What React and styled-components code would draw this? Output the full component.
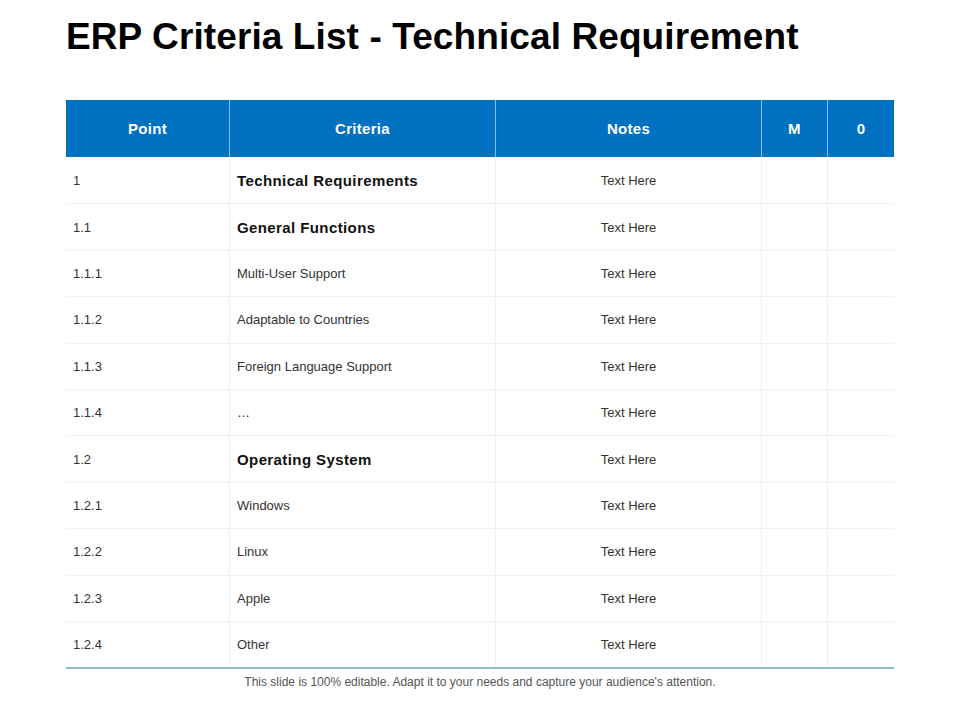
import React from "react";
import styled, { createGlobalStyle } from "styled-components";

const Global = createGlobalStyle`
  html, body { margin: 0; padding: 0; background: #fff; }
  body { font-family: "Liberation Sans", Arial, sans-serif; }
`;

const Page = styled.div`
  width: 960px;
  height: 720px;
  box-sizing: border-box;
  padding: 16px 66px 0 66px;
  display: flex;
  flex-direction: column;
`;

const Title = styled.h1`
  margin: 0;
  font-size: 37px;
  line-height: 42px;
  font-weight: 700;
  color: #000;
  letter-spacing: 0.1px;
  white-space: nowrap;
`;

const Table = styled.div`
  margin-top: 42px;
  display: grid;
  grid-template-columns: 163px 266px 266px 66px 67px;
  border-bottom: 2px solid #8fbec8;
`;

const HeadCell = styled.div`
  height: 57px;
  background: #0070c0;
  color: #fff;
  font-weight: 700;
  font-size: 15px;
  letter-spacing: 0.3px;
  display: flex;
  align-items: center;
  justify-content: center;
  border-left: ${(p) => (p.$first ? "none" : "1px solid #7ec3ef")};
`;

const Cell = styled.div`
  height: 46.4px;
  box-sizing: border-box;
  display: flex;
  align-items: center;
  justify-content: ${(p) => (p.$center ? "center" : "flex-start")};
  padding-left: ${(p) => (p.$center ? "0" : "7px")};
  border-left: ${(p) => (p.$first ? "none" : "1px solid #f0f0f0")};
  border-top: ${(p) => (p.$top ? "none" : "1px solid #f0f0f0")};
  font-size: ${(p) => (p.$bold ? "15px" : "13px")};
  letter-spacing: ${(p) => (p.$bold ? "0.4px" : "0")};
  font-weight: ${(p) => (p.$bold ? 700 : 400)};
  color: ${(p) => (p.$bold ? "#111" : "#333")};
`;

const Footer = styled.div`
  margin-top: 6px;
  text-align: center;
  font-size: 12px;
  color: #555;
`;

const rows = [
  ["1", "Technical Requirements", true],
  ["1.1", "General Functions", true],
  ["1.1.1", "Multi-User Support"],
  ["1.1.2", "Adaptable to Countries"],
  ["1.1.3", "Foreign Language Support"],
  ["1.1.4", "…"],
  ["1.2", "Operating System", true],
  ["1.2.1", "Windows"],
  ["1.2.2", "Linux"],
  ["1.2.3", "Apple"],
  ["1.2.4", "Other"],
];

export default function App() {
  return (
    <>
      <Global />
      <Page>
        <Title>ERP Criteria List - Technical Requirement</Title>
        <Table>
          <HeadCell $first>Point</HeadCell>
          <HeadCell>Criteria</HeadCell>
          <HeadCell>Notes</HeadCell>
          <HeadCell>M</HeadCell>
          <HeadCell>0</HeadCell>
          {rows.map(([pt, crit, bold], i) => (
            <React.Fragment key={pt}>
              <Cell $first $top={i === 0}>{pt}</Cell>
              <Cell $top={i === 0} $bold={bold}>{crit}</Cell>
              <Cell $top={i === 0} $center>Text Here</Cell>
              <Cell $top={i === 0} />
              <Cell $top={i === 0} />
            </React.Fragment>
          ))}
        </Table>
        <Footer>This slide is 100% editable. Adapt it to your needs and capture your audience's attention.</Footer>
      </Page>
    </>
  );
}
